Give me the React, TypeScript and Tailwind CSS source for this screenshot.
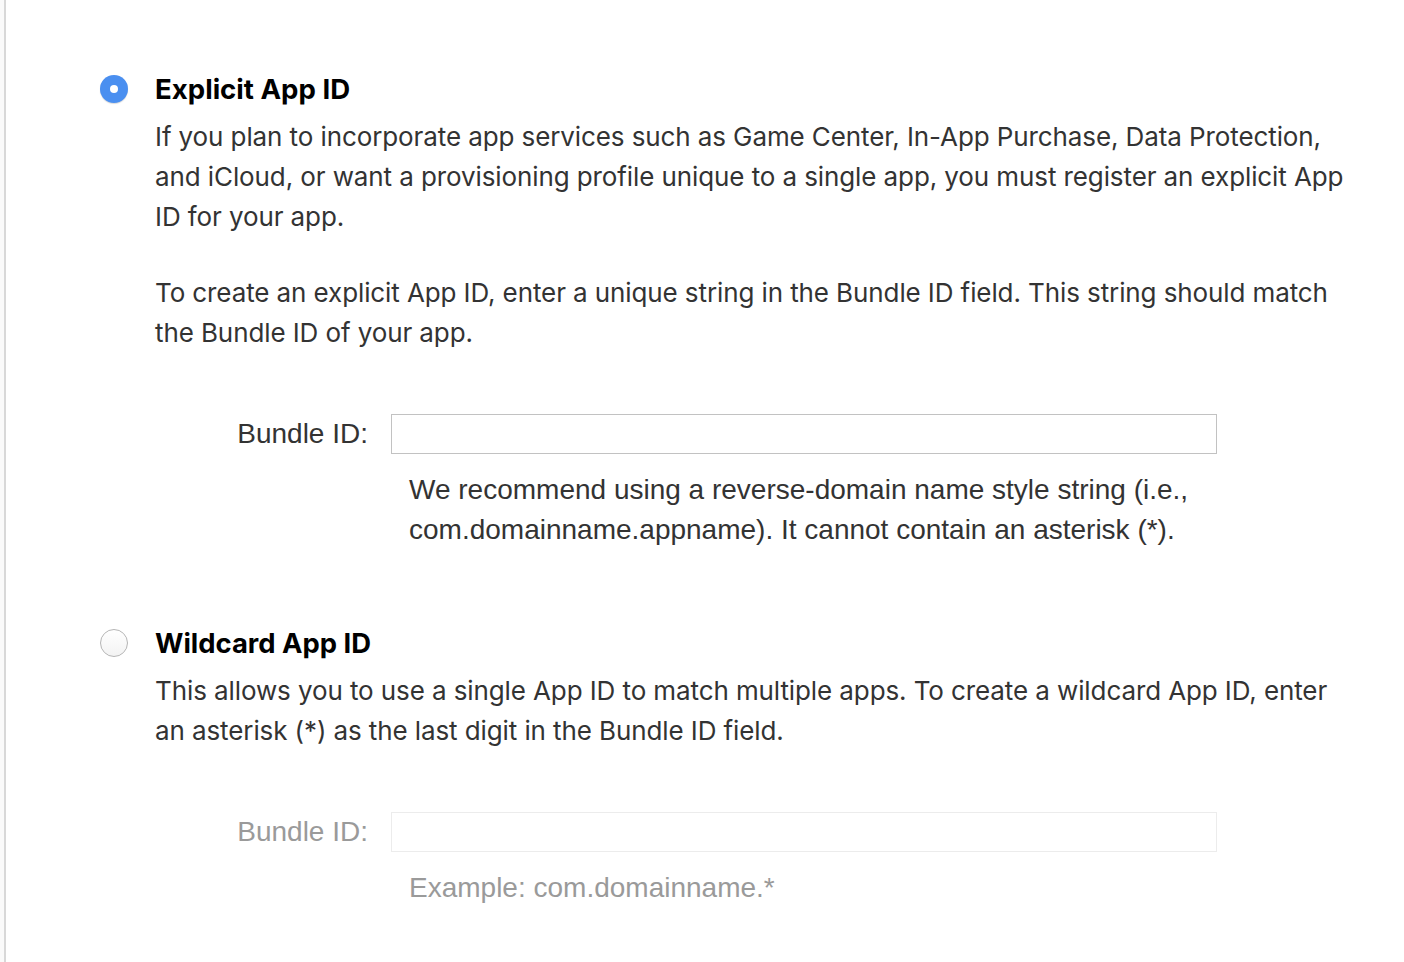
import React from 'react'

const body = "font-['Inter','Liberation_Sans',sans-serif]"
const helv = "font-['Liberation_Sans','Arial',sans-serif]"

function Radio({ checked }: { checked: boolean }) {
  if (checked) {
    return (
      <div className="w-[28px] h-[28px] rounded-full bg-[#4a8ff0] flex items-center justify-center shadow-[0_1px_1px_rgba(0,0,0,0.15)]">
        <div className="w-[8px] h-[8px] rounded-full bg-white" />
      </div>
    )
  }
  return (
    <div className="w-[28px] h-[28px] rounded-full border border-[#b5b5b5] bg-gradient-to-b from-white to-[#f3f3f3]" />
  )
}

function BundleRow({ disabled, hint }: { disabled?: boolean; hint: React.ReactNode }) {
  const color = disabled ? 'text-[#9a9a9a]' : 'text-[#333]'
  return (
    <div className="mt-[61px]">
      <div className="flex items-center">
        <label className={`${helv} w-[268px] text-right text-[28px] leading-[40px] ${color}`}>
          Bundle ID:
        </label>
        <input
          type="text"
          disabled={disabled}
          className={`ml-[23px] w-[826px] h-[40px] bg-white border ${disabled ? 'border-[#ececec]' : 'border-[#c2c2c2]'}`}
        />
      </div>
      <p className={`${helv} ml-[309px] mt-[16px] text-[28px] leading-[40px] ${color}`}>
        {hint}
      </p>
    </div>
  )
}

export default function App() {
  return (
    <div className="min-h-[962px] bg-[#fafafa] pl-[4px]">
      <div className="min-h-[962px] bg-white border-l-2 border-[#d8d8d8] pt-[69px] pl-[94px]">
        {/* Explicit */}
        <div className="flex">
          <div className="w-[55px] pt-[6px]">
            <Radio checked />
          </div>
          <div>
            <h2 className={`${body} text-[27.6px] leading-[40px] font-bold text-black`}>Explicit App ID</h2>
            <p className={`${body} mt-[8px] text-[26px] tracking-[-0.1px] leading-[40px] text-[#333]`}>
              If you plan to incorporate app services such as Game Center, In-App Purchase, Data Protection,<br />
              and iCloud, or want a provisioning profile unique to a single app, you must register an explicit App<br />
              ID for your app.
            </p>
            <p className={`${body} mt-[36px] text-[26px] tracking-[-0.1px] leading-[40px] text-[#333]`}>
              To create an explicit App ID, enter a unique string in the Bundle ID field. This string should match<br />
              the Bundle ID of your app.
            </p>
          </div>
        </div>
        <BundleRow
          hint={
            <>
              We recommend using a reverse-domain name style string (i.e.,<br />
              com.domainname.appname). It cannot contain an asterisk (*).
            </>
          }
        />

        {/* Wildcard */}
        <div className="flex mt-[73px]">
          <div className="w-[55px] pt-[6px]">
            <Radio checked={false} />
          </div>
          <div>
            <h2 className={`${body} text-[27.4px] leading-[40px] font-bold text-black`}>Wildcard App ID</h2>
            <p className={`${body} mt-[8px] text-[26px] tracking-[-0.1px] leading-[40px] text-[#333]`}>
              This allows you to use a single App ID to match multiple apps. To create a wildcard App ID, enter<br />
              an asterisk (*) as the last digit in the Bundle ID field.
            </p>
          </div>
        </div>
        <BundleRow disabled hint="Example: com.domainname.*" />
      </div>
    </div>
  )
}
